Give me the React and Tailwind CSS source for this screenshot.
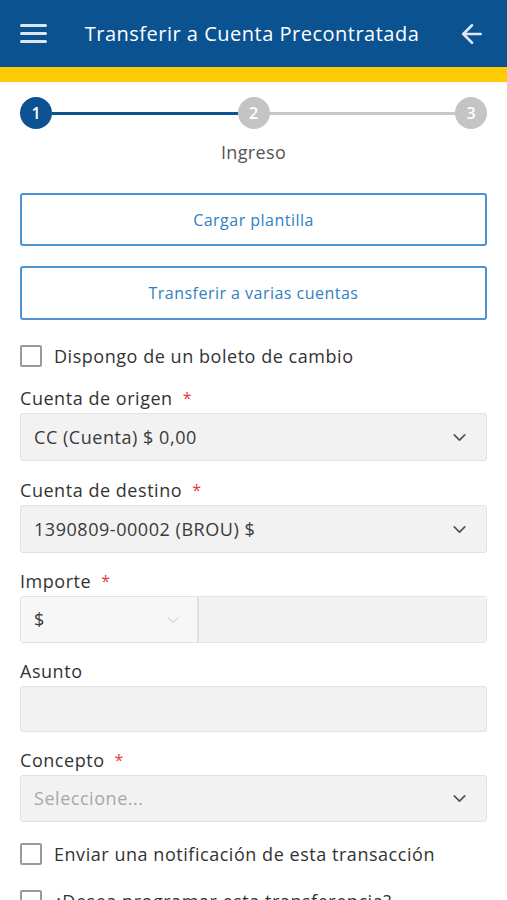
import React from 'react';
import { ChevronDown, ArrowLeft } from 'lucide-react';

const font = { fontFamily: '"Open Sans", "Noto Sans", sans-serif' };

function Checkbox({ label, className = '' }) {
  return (
    <label className={`flex items-center gap-3 ${className}`}>
      <span className="h-[22px] w-[22px] shrink-0 rounded-[2px] border-2 border-[#9a9a9a] bg-white"></span>
      <span className="text-[18px] leading-[22px] tracking-[0.03em] text-[#333]">{label}</span>
    </label>
  );
}

function FieldLabel({ children, required }) {
  return (
    <div className="mb-[5px] flex items-center text-[18px] leading-[20px] tracking-[0.03em] text-[#333]">
      <span>{children}</span>
      {required && <span className="ml-[10px] text-[16px] text-[#e53935]">*</span>}
    </div>
  );
}

function Select({ value, placeholder, h = 'h-[48px]' }) {
  return (
    <div className={`flex ${h} items-center justify-between rounded-[3px] border border-[#e2e2e2] bg-[#f2f2f2] pl-[13px] pr-[16px]`}>
      <span className={`text-[18px] tracking-[0.03em] ${placeholder ? 'text-[#a8a8a8]' : 'text-[#3a3a3a]'}`}>
        {value || placeholder}
      </span>
      <ChevronDown size={21} strokeWidth={2} className="text-[#555]" />
    </div>
  );
}

function Step({ n, active }) {
  return (
    <div
      className={`flex h-8 w-8 shrink-0 items-center justify-center rounded-full text-[16px] font-semibold text-white ${
        active ? 'bg-[#0c5292]' : 'bg-[#c4c4c4]'
      }`}
    >
      {n}
    </div>
  );
}

export default function App() {
  return (
    <div className="min-h-[900px] overflow-hidden bg-white" style={font}>
      <header className="flex h-[67px] items-center bg-[#0b5291] px-5">
        <div className="flex w-[27px] flex-col gap-[5px]">
          <span className="h-[3px] w-full rounded bg-[#dfe8f2]"></span>
          <span className="h-[3px] w-full rounded bg-[#dfe8f2]"></span>
          <span className="h-[3px] w-full rounded bg-[#dfe8f2]"></span>
        </div>
        <h1 className="flex-1 text-center text-[20px] tracking-[0.025em] text-white">Transferir a Cuenta Precontratada</h1>
        <ArrowLeft size={30} strokeWidth={2} className="text-[#dfe8f2]" />
      </header>
      <div className="h-[15px] bg-[#ffcb05]"></div>

      <div className="px-5">
        <div className="mt-[15px] flex items-center">
          <Step n="1" active />
          <div className="h-[3px] flex-1 bg-[#0c5292]"></div>
          <Step n="2" />
          <div className="h-[3px] flex-1 bg-[#c8c8c8]"></div>
          <Step n="3" />
        </div>
        <p className="mt-[12px] text-center text-[18px] leading-[22px] tracking-[0.02em] text-[#555]">Ingreso</p>

        <button className="mt-[30px] flex h-[53px] w-full items-center justify-center rounded-[3px] border-2 border-[#4d93d3] text-[16px] tracking-[0.03em] text-[#2f7fc4]">
          Cargar plantilla
        </button>
        <button className="mt-[20px] flex h-[54px] w-full items-center justify-center rounded-[3px] border-2 border-[#4d93d3] text-[16px] tracking-[0.03em] text-[#2f7fc4]">
          Transferir a varias cuentas
        </button>

        <Checkbox label="Dispongo de un boleto de cambio" className="mt-[25px]" />

        <div className="mt-[21px]">
          <FieldLabel required>Cuenta de origen</FieldLabel>
          <Select value="CC (Cuenta) $ 0,00" />
        </div>

        <div className="mt-[19px]">
          <FieldLabel required>Cuenta de destino</FieldLabel>
          <Select value="1390809-00002 (BROU) $" />
        </div>

        <div className="mt-[18px]">
          <FieldLabel required>Importe</FieldLabel>
          <div className="flex h-[47px] rounded-[3px] border border-[#e2e2e2]">
            <div className="flex w-[178px] items-center justify-between border-r-2 border-[#e0e0e0] bg-[#f7f7f7] pl-[13px] pr-[14px]">
              <span className="text-[18px] text-[#3a3a3a]">$</span>
              <ChevronDown size={20} strokeWidth={1.5} className="text-[#dcdcdc]" />
            </div>
            <div className="flex-1 bg-[#f2f2f2]"></div>
          </div>
        </div>

        <div className="mt-[18px]">
          <FieldLabel>Asunto</FieldLabel>
          <div className="h-[46px] rounded-[3px] border border-[#e2e2e2] bg-[#f2f2f2]"></div>
        </div>

        <div className="mt-[18px]">
          <FieldLabel required>Concepto</FieldLabel>
          <Select placeholder="Seleccione..." h="h-[47px]" />
        </div>

        <Checkbox label="Enviar una notificación de esta transacción" className="mt-[21px]" />
        <Checkbox label="¿Desea programar esta transferencia?" className="mt-[25px]" />
      </div>
    </div>
  );
}
